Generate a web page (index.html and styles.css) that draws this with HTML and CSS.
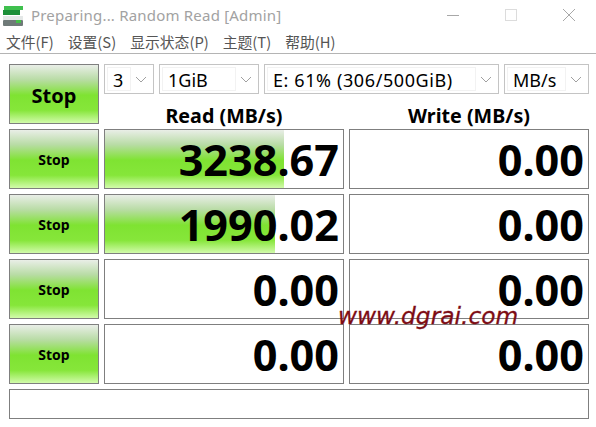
FILE: index.html
```html
<!DOCTYPE html>
<html lang="en">
<head>
    <meta charset="UTF-8">
    <meta name="viewport" content="width=device-width, initial-scale=1.0">
    <title>CrystalDiskMark</title>
    <link rel="stylesheet" href="styles.css">
</head>
<body>
    <div class="titlebar">
        <svg class="app-icon" width="24" height="24" viewBox="0 0 24 24">
            <rect x="3" y="3" width="19" height="4" fill="#3fc04e"/>
            <rect x="2" y="7" width="17" height="5" fill="#1c8f38"/>
            <rect x="2" y="13" width="20" height="4" fill="#e4e8e7"/>
            <rect x="2" y="17" width="20" height="6" rx="1" fill="#6f7a78"/>
            <rect x="15" y="17" width="5" height="3" fill="#45c04a"/>
        </svg>
        <span class="title-text">Preparing... Random Read [Admin]</span>
        <div class="window-buttons">
            <svg width="12" height="12" viewBox="0 0 12 12"><path d="M0 6.5H12" stroke="#a8a8a8" fill="none"/></svg>
            <svg width="12" height="12" viewBox="0 0 12 12"><rect x="0.5" y="0.5" width="11" height="11" stroke="#dcdcdc" fill="none"/></svg>
            <svg width="12" height="12" viewBox="0 0 12 12"><path d="M0 0L12 12M12 0L0 12" stroke="#a8a8a8" fill="none"/></svg>
        </div>
    </div>
    <div class="menubar">
        <span>文件(F)</span>
        <span>设置(S)</span>
        <span>显示状态(P)</span>
        <span>主题(T)</span>
        <span>帮助(H)</span>
    </div>

    <div class="board">
        <button class="stop stop-all">Stop</button>
        <div class="top-panel">
            <div class="combos">
                <div class="combo combo-count"><span class="combo-value">3</span><span class="combo-arrow"><svg width="12" height="7" viewBox="0 0 12 7"><path d="M1 1L6 6L11 1" stroke="#a0a0a0" fill="none"/></svg></span></div>
                <div class="combo combo-size"><span class="combo-value">1GiB</span><span class="combo-arrow"><svg width="12" height="7" viewBox="0 0 12 7"><path d="M1 1L6 6L11 1" stroke="#a0a0a0" fill="none"/></svg></span></div>
                <div class="combo combo-drive"><span class="combo-value">E: 61% (306/500GiB)</span><span class="combo-arrow"><svg width="12" height="7" viewBox="0 0 12 7"><path d="M1 1L6 6L11 1" stroke="#a0a0a0" fill="none"/></svg></span></div>
                <div class="combo combo-unit"><span class="combo-value">MB/s</span><span class="combo-arrow"><svg width="12" height="7" viewBox="0 0 12 7"><path d="M1 1L6 6L11 1" stroke="#a0a0a0" fill="none"/></svg></span></div>
            </div>
            <div class="headers">
                <div class="header">Read (MB/s)</div>
                <div class="header">Write (MB/s)</div>
            </div>
        </div>

        <button class="stop">Stop</button>
        <div class="cell"><div class="bar" style="width: 179px"></div><span class="num">3238.67</span></div>
        <div class="cell"><span class="num">0.00</span></div>

        <button class="stop">Stop</button>
        <div class="cell"><div class="bar" style="width: 170px"></div><span class="num">1990.02</span></div>
        <div class="cell"><span class="num">0.00</span></div>

        <button class="stop">Stop</button>
        <div class="cell"><span class="num">0.00</span></div>
        <div class="cell"><span class="num">0.00</span></div>

        <button class="stop">Stop</button>
        <div class="cell"><span class="num">0.00</span></div>
        <div class="cell"><span class="num">0.00</span></div>

        <div class="status"></div>
    </div>

    <div class="watermark">www.dgrai.com</div>
</body>
</html>
```

FILE: styles.css
```css
body {
    margin: 0;
    background-color: #fff;
    font-family: "Noto Sans", "Noto Sans CJK SC", sans-serif;
    color: #000;
    overflow: hidden;
}
.titlebar {
    display: flex;
    align-items: center;
    height: 29px;
    padding-left: 1px;
}
.app-icon {
    margin-right: 6px;
}
.title-text {
    font-size: 15px;
    letter-spacing: 0.2px;
    color: #a2a2a2;
}
.window-buttons {
    display: flex;
    gap: 46px;
    margin-left: auto;
    margin-right: 21px;
}
.menubar {
    display: flex;
    gap: 14px;
    height: 24px;
    padding-left: 6px;
    border-bottom: 1px solid #b4b4b4;
    font-family: "Noto Sans CJK SC", "Noto Sans", sans-serif;
    font-size: 14.8px;
    line-height: 25px;
    color: #555;
}
.board {
    display: grid;
    grid-template-columns: 90px 240px 240px;
    grid-template-rows: 60px 60px 60px 60px 60px 30px;
    gap: 5px;
    padding: 10px 0 0 9px;
}
.stop {
    padding: 0;
    border: 1px solid #7f7f7f;
    background: linear-gradient(#e9eee7 0%, #b9dca6 25%, #7fe332 52%, #86e63a 78%, #d2fbab 100%);
    font-family: "Noto Sans", sans-serif;
    font-size: 14px;
    font-weight: 700;
    color: #000;
}
.stop-all {
    font-size: 20px;
    padding-top: 3px;
}
.top-panel {
    grid-column: span 2;
    display: flex;
    flex-direction: column;
}
.combos {
    display: flex;
    gap: 5px;
    height: 30px;
}
.combo {
    display: flex;
    justify-content: space-between;
    box-sizing: border-box;
    border: 1px solid #c4c4c4;
    padding: 2px;
    font-size: 18px;
    line-height: 24px;
}
.combo-value {
    flex: 1;
    border: 1px solid #f2f2f2;
    padding-left: 5px;
    white-space: nowrap;
}
.combo-arrow {
    display: flex;
    align-items: center;
    justify-content: center;
    width: 20px;
}
.combo-count { width: 50px; }
.combo-size { width: 100px; }
.combo-drive { width: 235px; letter-spacing: 0.6px; }
.combo-unit { width: 85px; }
.headers {
    display: flex;
    gap: 5px;
}
.header {
    width: 240px;
    height: 30px;
    font-size: 19.7px;
    font-weight: 700;
    line-height: 44px;
    text-align: center;
}
.cell {
    position: relative;
    display: flex;
    justify-content: flex-end;
    align-items: center;
    box-sizing: border-box;
    border: 1px solid #7f7f7f;
    padding: 2px 4px 0 0;
}
.bar {
    position: absolute;
    left: 0;
    top: 0;
    bottom: 0;
    background: linear-gradient(#e9eee7 0%, #b9dca6 25%, #7fe332 52%, #86e63a 78%, #d2fbab 100%);
}
.num {
    position: relative;
    font-size: 43.2px;
    font-weight: 700;
    line-height: 1;
}
.status {
    grid-column: span 3;
    border: 1px solid #7f7f7f;
}
.watermark {
    position: absolute;
    left: 338px;
    top: 302px;
    font-family: "DejaVu Sans", sans-serif;
    font-size: 23.3px;
    font-style: italic;
    color: #7d0c14;
    -webkit-text-stroke: 0.3px #7d0c14;
}
```
